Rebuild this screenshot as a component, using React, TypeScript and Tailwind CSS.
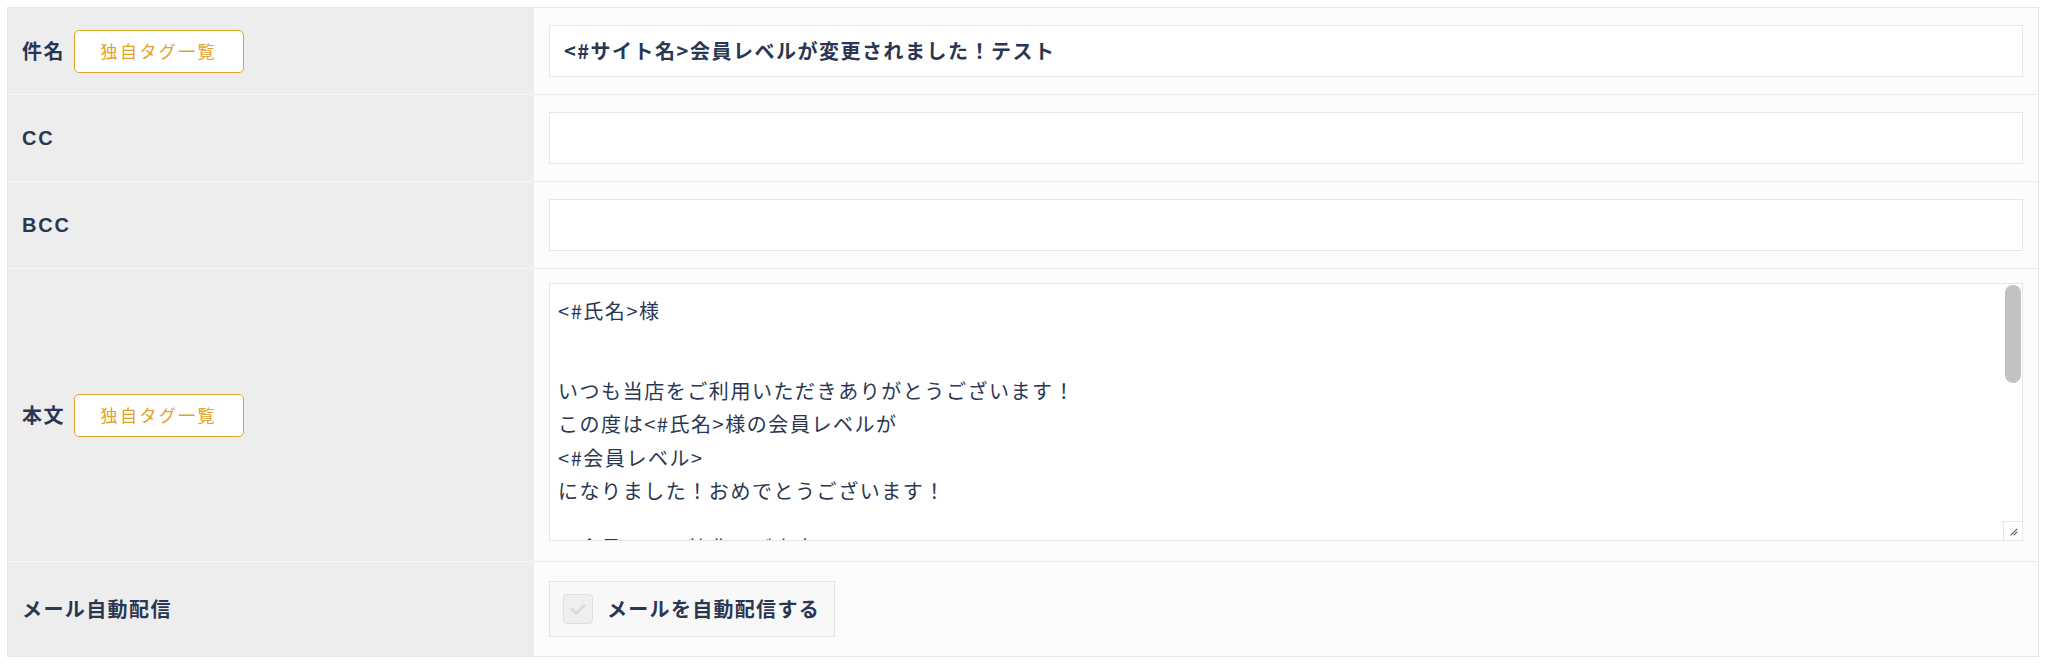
import React from "react";

const NAVY = "text-[#2a3753]";

function TagButton() {
  return (
    <button
      type="button"
      className="ml-[9px] flex h-[43px] w-[170px] items-center justify-center rounded-[5px] border border-[#e2a72a] bg-white text-[17px] tracking-[2.4px] text-[#e0a22a]"
    >
      独自タグ一覧
    </button>
  );
}

function Row({
  label,
  latin,
  button,
  children,
  valueClass,
  last,
}: {
  label: string;
  latin?: boolean;
  button?: boolean;
  children: React.ReactNode;
  valueClass: string;
  last?: boolean;
}) {
  return (
    <div className="flex">
      <div
        className={`flex w-[526px] shrink-0 items-center bg-[#ededed] pl-[14px] ${
          last ? "" : "border-b border-[#f7f7f7]"
        }`}
      >
        {latin ? (
          <span
            className={`text-[20px] font-bold tracking-[1.8px] ${NAVY}`}
            style={{ fontFamily: '"Liberation Sans", Arial, sans-serif' }}
          >
            {label}
          </span>
        ) : (
          <span className={`text-[20px] font-bold tracking-[1.4px] ${NAVY}`}>{label}</span>
        )}
        {button && <TagButton />}
      </div>
      <div
        className={`flex-1 bg-[#fcfcfc] px-[15px] ${valueClass} ${
          last ? "" : "border-b border-[#ebebeb]"
        }`}
      >
        {children}
      </div>
    </div>
  );
}

function TextInput({ value }: { value?: string }) {
  return (
    <div className="flex h-[52px] items-center border border-[#e6e6e6] bg-white pl-[14px]">
      {value && (
        <span className={`text-[20px] font-bold tracking-[1.5px] ${NAVY}`}>{value}</span>
      )}
    </div>
  );
}

function Line({ children }: { children: React.ReactNode }) {
  return <div className="h-[33.5px] whitespace-nowrap leading-[33.5px]">{children}</div>;
}

function Blank() {
  return <div className="h-[23px]" />;
}

function BodyArea() {
  return (
    <div className="relative h-[258px] overflow-hidden border border-[#e6e6e6] bg-white">
      <div className={`pl-[8px] pt-[10px] text-[20px] tracking-[1.55px] ${NAVY}`}>
        <Line>&lt;#氏名&gt;様</Line>
        <Blank />
        <Blank />
        <Line>いつも当店をご利用いただきありがとうございます！</Line>
        <Line>この度は&lt;#氏名&gt;様の会員レベルが</Line>
        <Line>&lt;#会員レベル&gt;</Line>
        <Line>になりました！おめでとうございます！</Line>
        <Blank />
        <Line>　会員レベル特典のご案内　</Line>
      </div>
      <div className="absolute right-[1px] top-[1px] h-[98px] w-[16px] rounded-full bg-[#c2c2c2]" />
      <div className="absolute bottom-0 right-0 flex h-[19px] w-[19px] items-center justify-center border-l border-t border-[#e6e6e6] bg-white">
        <svg width="10" height="10" viewBox="0 0 10 10">
          <path d="M9 3 L3 9 M9 6 L6 9" stroke="#6b6b6b" strokeWidth="1.1" strokeLinecap="round" />
        </svg>
      </div>
    </div>
  );
}

function AutoSend() {
  return (
    <div className="inline-flex h-[56px] items-center border border-[#e4e4e4] bg-[#f8f8f8] pl-[13px] pr-[14px]">
      <div className="flex h-[30px] w-[30px] items-center justify-center rounded-[4px] border border-[#dedede] bg-[#efefef]">
        <svg width="20" height="20" viewBox="0 0 20 20">
          <path
            d="M4 10.5 L8 14.5 L16 6.5"
            fill="none"
            stroke="#dadada"
            strokeWidth="3"
            strokeLinecap="round"
            strokeLinejoin="round"
          />
        </svg>
      </div>
      <span className={`ml-[14px] text-[20px] font-bold tracking-[1.3px] ${NAVY}`}>
        メールを自動配信する
      </span>
    </div>
  );
}

export default function App() {
  return (
    <div
      className="h-[669px] overflow-hidden bg-white pl-[7px] pr-[9px] pt-[7px]"
      style={{ fontFamily: '"Noto Sans CJK JP", "Noto Sans", sans-serif' }}
    >
      <div className="border border-[#e6e6e6]">
        <Row label="件名" button valueClass="py-[17px]">
          <TextInput value="<#サイト名>会員レベルが変更されました！テスト" />
        </Row>
        <Row label="CC" latin valueClass="py-[17px]">
          <TextInput />
        </Row>
        <Row label="BCC" latin valueClass="py-[17px]">
          <TextInput />
        </Row>
        <Row label="本文" button valueClass="pt-[14px] pb-[20px]">
          <BodyArea />
        </Row>
        <Row label="メール自動配信" valueClass="pt-[19px] pb-[19px]" last>
          <AutoSend />
        </Row>
      </div>
    </div>
  );
}
